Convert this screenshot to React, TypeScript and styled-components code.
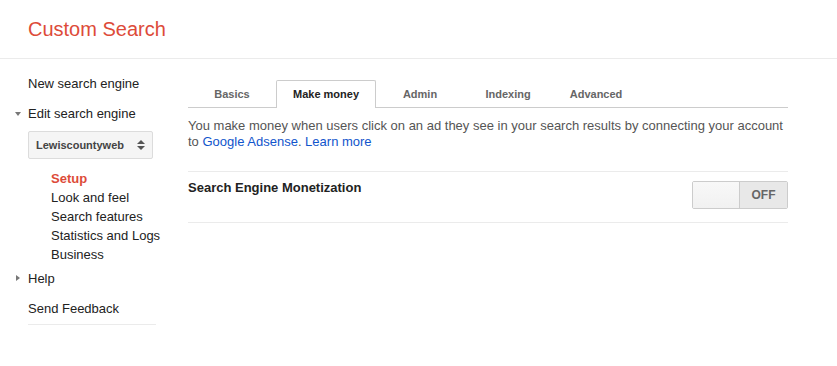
import React from 'react';
import styled, { createGlobalStyle } from 'styled-components';

const GlobalStyle = createGlobalStyle`
  html, body {
    margin: 0;
    padding: 0;
    background: #fff;
  }
  body {
    font-family: 'Liberation Sans', Arial, sans-serif;
    font-size: 13px;
    color: #222;
  }
`;

const tabs = ['Basics', 'Make money', 'Admin', 'Indexing', 'Advanced'];
const subItems = ['Setup', 'Look and feel', 'Search features', 'Statistics and Logs', 'Business'];

const App = () => {
  return (
    <>
      <GlobalStyle />
      <Header>
        <Title>Custom Search</Title>
      </Header>
      <Body>
        <Sidebar>
          <NavItem>New search engine</NavItem>
          <NavItem $gap={11}>
            <Caret $open />
            Edit search engine
          </NavItem>
          <EngineSelect>
            <span>Lewiscountyweb</span>
            <Spinner>
              <Up />
              <Down />
            </Spinner>
          </EngineSelect>
          <SubList>
            {subItems.map((item, i) => (
              <SubItem key={item} $active={i === 0}>
                {item}
              </SubItem>
            ))}
          </SubList>
          <NavItem $gap={5}>
            <Caret />
            Help
          </NavItem>
          <FeedbackItem>Send Feedback</FeedbackItem>
        </Sidebar>
        <Main>
          <TabBar>
            {tabs.map((tab) => (
              <Tab key={tab} $active={tab === 'Make money'}>
                {tab}
              </Tab>
            ))}
          </TabBar>
          <Description>
            You make money when users click on an ad they see in your search results by connecting your account
            <br />
            to <Link>Google Adsense</Link>. <Link>Learn more</Link>
          </Description>
          <SettingRow>
            <SettingLabel>Search Engine Monetization</SettingLabel>
            <Toggle>
              <ToggleKnob />
              <ToggleState>OFF</ToggleState>
            </Toggle>
          </SettingRow>
        </Main>
      </Body>
    </>
  );
};

const Header = styled.header`
  height: 58px;
  display: flex;
  align-items: center;
  padding-left: 28px;
  border-bottom: 1px solid #ebebeb;
`;

const Title = styled.h1`
  margin: 0;
  font-size: 20px;
  font-weight: normal;
  color: #dd4b39;
  line-height: 24px;
`;

const Body = styled.div`
  display: flex;
`;

const Sidebar = styled.nav`
  width: 142px;
  padding: 15px 0 0 14px;
  display: flex;
  flex-direction: column;
`;

const NavItem = styled.div<{ $gap?: number }>`
  display: flex;
  align-items: center;
  height: 19px;
  line-height: 19px;
  margin-top: ${({ $gap }) => $gap ?? 0}px;
  padding-left: 14px;
  position: relative;
  white-space: nowrap;
`;

const Caret = styled.span<{ $open?: boolean }>`
  position: absolute;
  left: ${({ $open }) => ($open ? 1 : 2)}px;
  top: ${({ $open }) => ($open ? 8 : 6)}px;
  width: 0;
  height: 0;
  ${({ $open }) =>
    $open
      ? `border-left: 3.5px solid transparent;
         border-right: 3.5px solid transparent;
         border-top: 4px solid #777;`
      : `border-top: 3.5px solid transparent;
         border-bottom: 3.5px solid transparent;
         border-left: 4px solid #777;`}
`;

const EngineSelect = styled.div`
  margin: 8px 0 0 14px;
  width: 125px;
  height: 28px;
  box-sizing: border-box;
  border: 1px solid #dcdcdc;
  border-radius: 2px;
  background: #f5f5f5;
  display: flex;
  align-items: center;
  justify-content: space-between;
  padding: 0 7px 0 7px;
  font-size: 11px;
  font-weight: bold;
  color: #444;
`;

const Spinner = styled.span`
  display: flex;
  flex-direction: column;
  gap: 2px;
`;

const Up = styled.span`
  width: 0;
  height: 0;
  border-left: 4px solid transparent;
  border-right: 4px solid transparent;
  border-bottom: 4px solid #555;
`;

const Down = styled(Up)`
  border-bottom: none;
  border-top: 4px solid #555;
`;

const SubList = styled.ul`
  list-style: none;
  margin: 10px 0 0;
  padding: 0 0 0 37px;
`;

const SubItem = styled.li<{ $active?: boolean }>`
  height: 19px;
  line-height: 19px;
  white-space: nowrap;
  color: ${({ $active }) => ($active ? '#dd4b39' : '#222')};
  font-weight: ${({ $active }) => ($active ? 'bold' : 'normal')};
`;

const FeedbackItem = styled(NavItem)`
  margin: 11px 0 0 14px;
  padding: 0 0 6px;
  border-bottom: 1px solid #ebebeb;
  height: auto;
`;

const Main = styled.main`
  width: 600px;
  margin-left: 32px;
  padding-top: 21px;
`;

const TabBar = styled.div`
  display: flex;
  border-bottom: 1px solid #ccc;
`;

const Tab = styled.div<{ $active?: boolean }>`
  min-width: 88px;
  box-sizing: border-box;
  padding: 0 16px 2px;
  height: 28px;
  line-height: 26px;
  text-align: center;
  font-size: 11px;
  font-weight: bold;
  color: ${({ $active }) => ($active ? '#222' : '#666')};
  background: ${({ $active }) => ($active ? '#fff' : 'transparent')};
  border: 1px solid ${({ $active }) => ($active ? '#ccc' : 'transparent')};
  border-bottom: none;
  border-radius: 2px 2px 0 0;
  margin-bottom: ${({ $active }) => ($active ? -1 : 0)}px;
  height: ${({ $active }) => ($active ? 28 : 27)}px;
`;

const Description = styled.p`
  margin: 10px 0 0;
  line-height: 16px;
  color: #555;
  white-space: nowrap;
`;

const Link = styled.a`
  color: #15c;
  text-decoration: none;
  cursor: pointer;
`;

const SettingRow = styled.div`
  margin-top: 21px;
  border-top: 1px solid #ebebeb;
  border-bottom: 1px solid #ebebeb;
  padding: 8px 0 13px;
  display: flex;
  justify-content: space-between;
  align-items: flex-start;
`;

const SettingLabel = styled.div`
  font-weight: bold;
  line-height: 16px;
  color: #222;
`;

const Toggle = styled.div`
  margin-top: 1px;
  width: 96px;
  height: 28px;
  box-sizing: border-box;
  border: 1px solid #ccc;
  border-radius: 2px;
  display: flex;
  overflow: hidden;
`;

const ToggleKnob = styled.div`
  flex: 1;
  background: linear-gradient(#f8f8f8, #f1f1f1);
  border-right: 1px solid #ccc;
`;

const ToggleState = styled.div`
  width: 47px;
  background: #e8e8e8;
  display: flex;
  align-items: center;
  justify-content: center;
  font-size: 12px;
  font-weight: bold;
  color: #666;
`;

export default App;
